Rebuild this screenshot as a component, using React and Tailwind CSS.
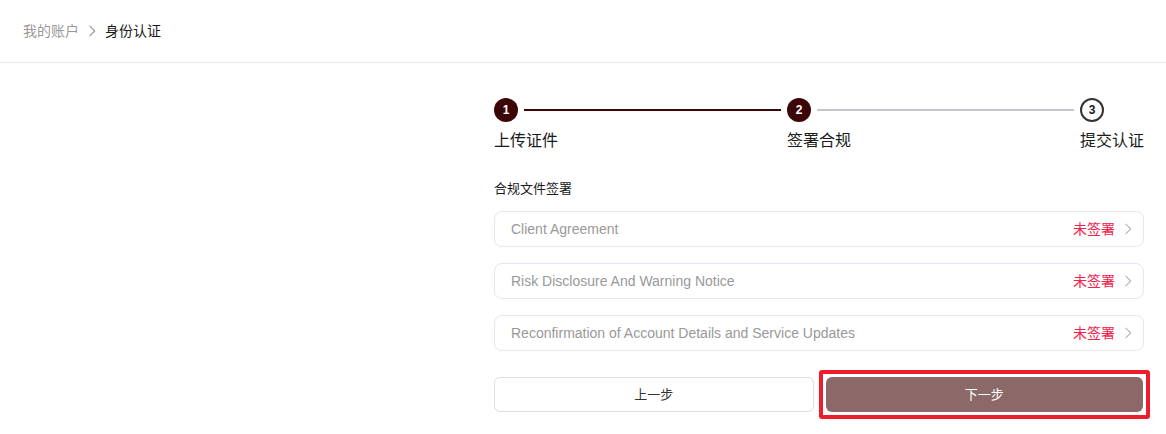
import React from "react";

const font = { fontFamily: '"Liberation Sans", "Noto Sans CJK SC", Arial, sans-serif' };

function Chevron({ className }) {
  return (
    <svg className={className} viewBox="0 0 16 16" fill="none" stroke="currentColor" strokeWidth="1.3" strokeLinecap="round" strokeLinejoin="round">
      <path d="M5.5 2.5 L11 8 L5.5 13.5" />
    </svg>
  );
}

function Row({ title }) {
  return (
    <div className="flex h-9 items-center justify-between rounded-lg border border-[#e4e7ed] pl-4 pr-[8px]">
      <span className="text-[14px] text-[#999999]">{title}</span>
      <div className="flex items-center gap-[6px]">
        <span className="text-[14px] text-[#f5224b]">未签署</span>
        <Chevron className="h-[14px] w-[14px] text-[#b5b8be]" />
      </div>
    </div>
  );
}

export default function App() {
  return (
    <div className="min-h-[434px] w-full bg-white" style={font}>
      <div className="flex h-[63px] items-center border-b border-[#e6e6ea] pl-[23px] text-[14px]">
        <span className="text-[#999999]">我的账户</span>
        <Chevron className="mx-[6px] h-[14px] w-[14px] text-[#999999]" />
        <span className="text-[#1a1a1a]">身份认证</span>
      </div>

      <div className="pl-[494px] pr-[22px] pt-[35px]">
        <div className="flex">
          <div className="flex flex-1 flex-col">
            <div className="flex items-center">
              <div className="flex h-6 w-6 items-center justify-center rounded-full bg-[#3d0606] text-[12px] font-bold text-white">1</div>
              <div className="mx-[6px] h-[2px] flex-1 bg-[#3d0606]" />
            </div>
            <div className="mt-[7px] text-[16px] leading-6 text-[#1a1a1a]">上传证件</div>
          </div>
          <div className="flex flex-1 flex-col">
            <div className="flex items-center">
              <div className="flex h-6 w-6 items-center justify-center rounded-full bg-[#3d0606] text-[12px] font-bold text-white">2</div>
              <div className="mx-[6px] h-[2px] flex-1 bg-[#c4c6cc]" />
            </div>
            <div className="mt-[7px] text-[16px] leading-6 text-[#1a1a1a]">签署合规</div>
          </div>
          <div className="flex flex-col">
            <div className="flex items-center">
              <div className="flex h-6 w-6 items-center justify-center rounded-full border-2 border-[#333333] bg-white text-[12px] font-bold text-[#1a1a1a]">3</div>
            </div>
            <div className="mt-[7px] text-[16px] leading-6 text-[#1a1a1a]">提交认证</div>
          </div>
        </div>

        <div className="mt-[26px] text-[13px] leading-5 text-[#1a1a1a]">合规文件签署</div>

        <div className="mt-[12px] flex flex-col gap-[16px]">
          <Row title="Client Agreement" />
          <Row title="Risk Disclosure And Warning Notice" />
          <Row title="Reconfirmation of Account Details and Service Updates" />
        </div>

        <div className="mt-[26px] flex gap-3 pr-px">
          <button className="h-[35px] flex-1 rounded-md border border-[#dcdfe6] bg-white text-[13px] text-[#333333]">上一步</button>
          <div className="relative flex-1">
            <button className="h-[35px] w-full rounded-md bg-[#8c6969] text-[13px] text-white">下一步</button>
            <div className="pointer-events-none absolute -inset-[7px] rounded-[3px] border-4 border-[#ee1d2b]" />
          </div>
        </div>
      </div>
    </div>
  );
}
